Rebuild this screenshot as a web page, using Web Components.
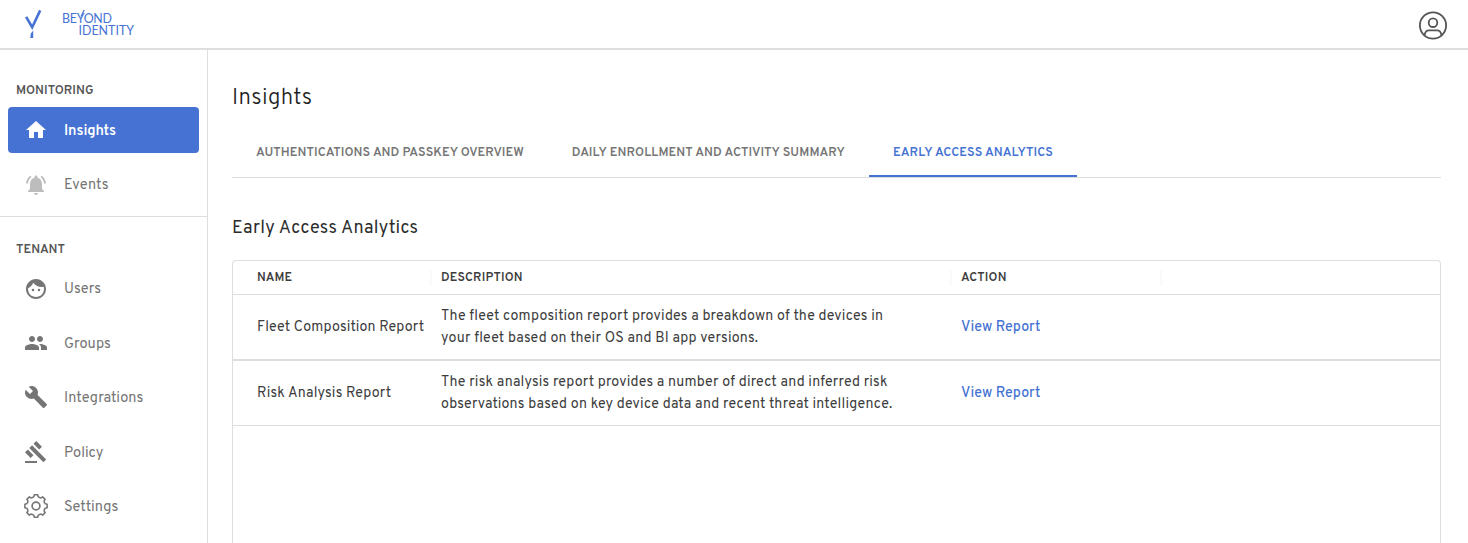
<!DOCTYPE html>
<html lang="en">
<head>
<meta charset="utf-8">
<title>Insights</title>
<style>
  body { margin: 0; background: #fff; overflow: hidden; font-family: Overpass, Roboto, "Liberation Sans", sans-serif; color: #333; }
</style>
</head>
<body>
<bi-app></bi-app>
<script>
const define = (name, html, ready) => {
  const template = document.createElement('template');
  template.innerHTML = html;
  customElements.define(name, class extends HTMLElement {
    connectedCallback() {
      if (this.shadowRoot) return;
      this.attachShadow({ mode: 'open' }).append(template.content.cloneNode(true));
      if (ready) ready(this, this.shadowRoot);
    }
  });
};

// One line of text whose tracking is set so that it spans the given width.
define('bi-text', `<style>:host{display:block;white-space:nowrap}span{display:inline-block}</style><span><slot></slot></span>`, (el, root) => {
  const span = root.querySelector('span');
  const want = parseFloat(el.getAttribute('span'));
  const n = el.textContent.length;
  const natural = span.getBoundingClientRect().width;
  if (want && natural) span.style.letterSpacing = ((want - natural) / (n - 1)).toFixed(4) + 'px';
});

const gear = (() => {
  const pts = [];
  const at = (deg, r) => { const a = deg * Math.PI / 180; return (12 + r * Math.sin(a)).toFixed(2) + ' ' + (12 - r * Math.cos(a)).toFixed(2); };
  for (let i = 0; i < 8; i++) {
    const c = i * 45;
    pts.push(at(c - 13, 9.5), at(c - 9, 11.3), at(c + 9, 11.3), at(c + 13, 9.5), at(c + 22.5, 9.1));
  }
  return `<path d="M${pts.join('L')}Z" fill="none" stroke="currentColor" stroke-width="1.5" stroke-linejoin="round"/><circle cx="12" cy="12" r="3.9" fill="none" stroke="currentColor" stroke-width="1.7"/>`;
})();

const icons = {
  home: '<path d="M10 20v-6h4v6h5v-8h3L12 3 2 12h3v8z"/>',
  bell: '<path d="M7.58 4.08L6.15 2.65C3.75 4.48 2.17 7.3 2.03 10.5h2c.15-2.65 1.51-4.97 3.55-6.42zm12.39 6.42h2c-.15-3.2-1.73-6.02-4.12-7.85l-1.42 1.43c2.02 1.45 3.39 3.77 3.54 6.42zM18 11c0-3.07-1.64-5.64-4.5-6.32V4c0-.83-.67-1.5-1.5-1.5s-1.5.67-1.5 1.5v.68C7.63 5.36 6 7.92 6 11v5l-2 2v1h16v-1l-2-2v-5zm-6 11c.14 0 .27-.01.4-.04.65-.14 1.18-.58 1.44-1.18.1-.24.15-.5.15-.78h-4c.01 1.1.9 2 2.01 2z"/>',
  face: '<circle cx="9" cy="13" r="1.25"/><circle cx="15" cy="13" r="1.25"/><path d="M12 2C6.48 2 2 6.48 2 12s4.48 10 10 10 10-4.48 10-10S17.52 2 12 2zm0 18c-4.41 0-8-3.59-8-8 0-.29.02-.58.05-.86 2.36-1.05 4.23-2.98 5.21-5.37C11.07 8.33 14.05 10 17.42 10c.78 0 1.53-.09 2.25-.26.21.71.33 1.47.33 2.26 0 4.41-3.59 8-8 8z"/>',
  people: '<path d="M16 11c1.66 0 2.99-1.34 2.99-3S17.66 5 16 5c-1.66 0-3 1.34-3 3s1.34 3 3 3zm-8 0c1.66 0 2.99-1.34 2.99-3S9.66 5 8 5C6.34 5 5 6.34 5 8s1.34 3 3 3zm0 2c-2.33 0-7 1.17-7 3.5V19h14v-2.5c0-2.33-4.67-3.5-7-3.5zm8 0c-.29 0-.62.02-.97.05 1.16.84 1.97 1.97 1.97 3.45V19h6v-2.5c0-2.33-4.67-3.5-7-3.5z"/>',
  wrench: '<path d="M22.7 19l-9.1-9.1c.9-2.3.4-5-1.5-6.9-2-2-5-2.4-7.4-1.3L9 6 6 9 1.6 4.7C.4 7.1.9 10.1 2.9 12.1c1.9 1.9 4.6 2.4 6.9 1.5l9.1 9.1c.4.4 1 .4 1.4 0l2.3-2.3c.5-.4.5-1.1.1-1.4z"/>',
  gavel: '<path d="M1 21h12v2H1zM5.245 8.07l2.83-2.827 14.14 14.142-2.828 2.828zM12.317 1l5.657 5.656-2.83 2.83-5.654-5.66zM3.825 9.485l5.657 5.657-2.828 2.828-5.657-5.657z"/>',
  gear
};

define('bi-icon', `<style>:host{display:block;width:24px;height:24px}svg{display:block;width:24px;height:24px;fill:currentColor}</style><svg viewBox="0 0 24 24"></svg>`, (el, root) => {
  root.querySelector('svg').innerHTML = icons[el.getAttribute('name')];
});

define('bi-logo', `<style>
  :host{display:flex;height:48px;color:#4673d3;font-family:Lato,sans-serif}
  svg{display:block}
  .word{margin-left:14px;padding-top:13px;font-size:12.4px;line-height:12px;position:relative}
  .two{margin-left:16.5px}
  .arm{position:absolute;left:0;top:0}
</style>
<svg width="48" height="48"><path d="M26.1 16.8 32.2 27.2 40.2 10.4" fill="none" stroke="currentColor" stroke-width="2.6"/><path d="M33.2 30.4V38H30.2L30.9 33.4Z" fill="currentColor"/></svg>
<div class="word"><bi-text span="50">BEYOND</bi-text><bi-text class="two" span="55.5">IDENTITY</bi-text>
<svg class="arm" width="60" height="20"><path d="M19 16.6 22.2 10" stroke="currentColor" stroke-width="1.2"/></svg></div>`);

define('bi-header', `<style>
  :host{display:flex;justify-content:space-between;height:48px;border-bottom:2px solid #dedede}
  .user{display:block;margin:11px 20px 0 0;color:#555}
</style>
<bi-logo></bi-logo>
<svg class="user" width="30" height="30" viewBox="0 0 30 30" fill="none" stroke="currentColor" stroke-width="1.8"><circle cx="15" cy="14.5" r="13.1"/><circle cx="15" cy="11.7" r="4.3"/><path d="M6.6 24.2C7 20.6 8.6 19.3 11 19.3H19C21.4 19.3 23 20.6 23.4 24.2"/></svg>`);

define('bi-nav-item', `<style>
  :host{display:flex;align-items:center;box-sizing:border-box;height:46.4px;margin:0 8px 8px;padding-left:16px;border-radius:4px;color:#757575;font-size:14.5px;line-height:20px}
  :host([active]){background:#4673d3;color:#fff;font-weight:600}
  :host([dim]) bi-icon{color:#bdbdbd}
</style><bi-icon></bi-icon><slot></slot>`, (el, root) => {
  const icon = document.createElement('bi-icon');
  icon.setAttribute('name', el.getAttribute('icon'));
  root.querySelector('bi-icon').replaceWith(icon);
});

define('bi-sidebar', `<style>
  :host{display:block;box-sizing:border-box;width:208px;flex:none;border-right:1px solid #dedede;padding-top:31px}
  bi-nav-item bi-text{margin-left:16px;padding-top:3.7px}
  .head{font-size:12.5px;font-weight:600;line-height:20px;color:#555;padding-left:16px}
  hr{border:0;border-top:1px solid #dedede;margin:0 0 23px}
</style>
<bi-text class="head" span="77.5" style="margin-bottom:6px">MONITORING</bi-text>
<bi-nav-item icon="home" active><bi-text span="52">Insights</bi-text></bi-nav-item>
<bi-nav-item icon="bell" dim><bi-text span="44.5">Events</bi-text></bi-nav-item>
<hr>
<bi-text class="head" span="49" style="margin-bottom:5.6px">TENANT</bi-text>
<bi-nav-item icon="face"><bi-text span="37">Users</bi-text></bi-nav-item>
<bi-nav-item icon="people"><bi-text span="46.8">Groups</bi-text></bi-nav-item>
<bi-nav-item icon="wrench"><bi-text span="79.3">Integrations</bi-text></bi-nav-item>
<bi-nav-item icon="gavel"><bi-text span="39.5">Policy</bi-text></bi-nav-item>
<bi-nav-item icon="gear"><bi-text span="54.3">Settings</bi-text></bi-nav-item>`);

define('bi-tab', `<style>
  :host{display:block;box-sizing:border-box;height:50px;padding:16px 24px 0;color:#757575;font-size:12.5px;font-weight:600;line-height:20px}
  :host([active]){color:#4673d3;border-bottom:2px solid #4673d3}
</style><slot></slot>`);

define('bi-row', `<style>
  :host{display:grid;grid-template-columns:208px 520px 210px 1fr;align-items:center;height:64px;border-top:1px solid #dedede;border-bottom:1px solid #dedede;font-size:14.2px;line-height:22px;color:#3c3c3c}
</style><slot name="name"></slot><slot name="desc"></slot><slot name="action"></slot>`);

define('bi-table', `<style>
  :host{display:block;flex:1;border:1px solid #dedede;border-bottom:0;border-radius:4px 4px 0 0}
  .head{display:grid;grid-template-columns:200px 520px 210px 1fr;align-items:center;height:33px;font-size:12.3px;font-weight:600;line-height:20px;color:#3c3c3c}
  .head>div{display:flex;align-items:center;height:16px;padding-left:8px;margin-right:1px;border-right:2px solid #fafafa}
  .head>div:first-child{padding-left:24px}
  [slot=name]{padding-left:24px}
  [slot=action]{color:#4673d3;font-weight:500}
</style>
<div class="head"><div><bi-text span="35">NAME</bi-text></div><div><bi-text span="81.5">DESCRIPTION</bi-text></div><div><bi-text span="45.5">ACTION</bi-text></div></div>
<bi-row><bi-text slot="name" span="167">Fleet Composition Report</bi-text>
<div slot="desc"><bi-text span="442">The fleet composition report provides a breakdown of the devices in</bi-text><bi-text span="317">your fleet based on their OS and BI app versions.</bi-text></div>
<bi-text slot="action" span="79.4">View Report</bi-text></bi-row>
<bi-row><bi-text slot="name" span="134">Risk Analysis Report</bi-text>
<div slot="desc"><bi-text span="446.5">The risk analysis report provides a number of direct and inferred risk</bi-text><bi-text span="451.2">observations based on key device data and recent threat intelligence.</bi-text></div>
<bi-text slot="action" span="79.4">View Report</bi-text></bi-row>`);

define('bi-page', `<style>
  :host{display:flex;flex-direction:column;flex:1;padding:34px 27px 0 24px}
  .title{font-size:22.3px;line-height:30px;color:#222;font-weight:350}
  .tabs{display:flex;margin-top:13px;border-bottom:1px solid #dedede}
  .sub{font-size:18px;line-height:24px;margin:39px 0 19px;color:#2c2c2c}
</style>
<bi-text class="title" span="80">Insights</bi-text>
<div class="tabs">
<bi-tab><bi-text span="267.7">AUTHENTICATIONS AND PASSKEY OVERVIEW</bi-text></bi-tab>
<bi-tab><bi-text span="273">DAILY ENROLLMENT AND ACTIVITY SUMMARY</bi-text></bi-tab>
<bi-tab active><bi-text span="160">EARLY ACCESS ANALYTICS</bi-text></bi-tab>
</div>
<bi-text class="sub" span="186">Early Access Analytics</bi-text>
<bi-table></bi-table>`);

define('bi-app', `<style>
  :host{display:flex;flex-direction:column;height:543px;overflow:hidden}
  main{display:flex;flex:1;min-height:0}
</style><bi-header></bi-header><main><bi-sidebar></bi-sidebar><bi-page></bi-page></main>`);
</script>
</body>
</html>
